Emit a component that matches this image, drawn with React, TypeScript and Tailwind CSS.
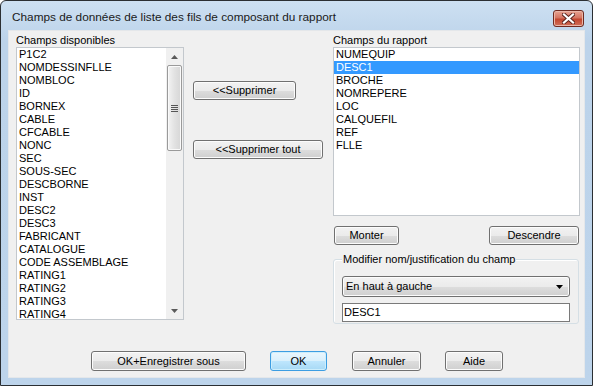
import React from 'react';

const leftItems = [
 'P1C2', 'NOMDESSINFLLE', 'NOMBLOC', 'ID', 'BORNEX', 'CABLE', 'CFCABLE', 'NONC', 'SEC', 'SOUS-SEC',
 'DESCBORNE', 'INST', 'DESC2', 'DESC3', 'FABRICANT', 'CATALOGUE', 'CODE ASSEMBLAGE',
 'RATING1', 'RATING2', 'RATING3', 'RATING4',
];

const rightItems = ['NUMEQUIP', 'DESC1', 'BROCHE', 'NOMREPERE', 'LOC', 'CALQUEFIL', 'REF', 'FLLE'];

const WinButton: React.FC<{ className?: string; primary?: boolean; children: React.ReactNode }> = ({ className = '', primary, children }) => (
 <button
 className={
 'flex items-center justify-center rounded-[3px] border text-[11px] leading-none text-black ' +
 (primary
 ? 'border-[#3c9de2] bg-[linear-gradient(#eaf6fd_0%,#d9f0fc_50%,#bee6fd_51%,#a7d9f5_100%)] shadow-[inset_0_0_0_1px_#cdeefc] '
 : 'border-[#707070] bg-[linear-gradient(#f2f2f2_0%,#ebebeb_50%,#dddddd_51%,#cfcfcf_100%)] shadow-[inset_0_0_0_1px_#fcfcfc] ') +
 className
 }
 >
 {children}
 </button>
);

const ScrollBar: React.FC = () => (
 <div className="flex h-full w-[17px] flex-col bg-[#f0f0f0]">
 <div className="flex h-[17px] items-center justify-center">
 <svg width="7" height="4" viewBox="0 0 7 4"><path d="M3.5 0 L7 4 L0 4 Z" fill="#5a5a5a" /></svg>
 </div>
 <div className="mx-[1px] flex h-[86px] items-center justify-center rounded-[2px] border border-[#9a9a9a] bg-[linear-gradient(90deg,#f3f3f3,#e2e2e2_50%,#d6d6d6)] shadow-[inset_0_0_0_1px_#fafafa]">
 <div className="flex flex-col gap-[1px]">
 <div className="h-[1px] w-[7px] bg-[#555]" />
 <div className="h-[1px] w-[7px] bg-[#555]" />
 <div className="h-[1px] w-[7px] bg-[#555]" />
 <div className="h-[1px] w-[7px] bg-[#555]" />
 </div>
 </div>
 <div className="flex-1" />
 <div className="flex h-[17px] items-center justify-center">
 <svg width="7" height="4" viewBox="0 0 7 4"><path d="M0 0 L7 0 L3.5 4 Z" fill="#5a5a5a" /></svg>
 </div>
 </div>
);

export default function App() {
 return (
 <div className="h-[386px] w-[593px] bg-white" style={{ fontFamily: '"Liberation Sans", Arial, sans-serif' }}>
 <div className="flex h-full w-full flex-col rounded-t-[6px] border border-[#2b2f33] bg-[linear-gradient(#cde0f2,#bcd3ea_40px,#bdd4eb)]">
 {/* title bar */}
 <div className="flex h-[29px] items-start">
 <div className="pl-[11px] pt-[9px] text-[11.8px] leading-[14px] text-[#1a1a1a]">
 Champs de données de liste des fils de composant du rapport
 </div>
 <div className="ml-auto mr-[8px] mt-[9px] flex h-[17px] w-[31px] items-center justify-center rounded-[3px] border border-[#6f2a20] bg-[linear-gradient(#e8a493,#d47461_45%,#c3462f_55%,#d0705a)] shadow-[inset_0_0_0_1px_#eab6a8]">
 <svg width="13" height="11" viewBox="0 0 13 11">
 <path d="M2 1.5 L11 9.5 M11 1.5 L2 9.5" stroke="#5b231c" strokeWidth="4" strokeLinecap="square" />
 <path d="M2 1.5 L11 9.5 M11 1.5 L2 9.5" stroke="#ffffff" strokeWidth="2.2" strokeLinecap="square" />
 </svg>
 </div>
 </div>

 {/* client area */}
 <div className="mx-[7px] mb-[7px] flex-1 border border-[#e4e7ea] bg-[#f0f0f0] text-[11px] leading-[13px] text-black">
 <div className="flex pl-[7px] pt-[3px]">
 {/* left column */}
 <div className="flex w-[168px] flex-col">
 <div className="h-[13px]">Champs disponibles</div>
 <div className="flex h-[273px] border border-[#c3c8cd] bg-white">
 <div className="flex-1">
 {leftItems.map((it) => (
 <div key={it} className="h-[13px] whitespace-nowrap pl-[2px]">{it}</div>
 ))}
 </div>
 <ScrollBar />
 </div>
 </div>

 {/* middle column */}
 <div className="ml-[9px] flex w-[130px] flex-col pt-[47px]">
 <WinButton className="h-[19px] w-[103px]">&lt;&lt;Supprimer</WinButton>
 <WinButton className="mt-[40px] h-[19px] w-[130px]">&lt;&lt;Supprimer tout</WinButton>
 </div>

 {/* right column */}
 <div className="ml-[10px] flex w-[247px] flex-col">
 <div className="h-[13px]">Champs du rapport</div>
 <div className="h-[169px] border border-[#c3c8cd] bg-white">
 {rightItems.map((it) => (
 <div
 key={it}
 className={'h-[13px] pl-[2px] ' + (it === 'DESC1' ? 'bg-[#3399ff] text-white' : '')}
 >
 {it}
 </div>
 ))}
 </div>
 <div className="mt-[10px] flex justify-between px-[1px]">
 <WinButton className="h-[19px] w-[65px]">Monter</WinButton>
 <WinButton className="h-[19px] w-[90px]">Descendre</WinButton>
 </div>
 <div className="relative mt-[8px] pt-[6px]">
 <div className="absolute left-[9px] top-0 bg-[#f0f0f0] px-[1px]">Modifier nom/justification du champ</div>
 <div className="h-[65px] w-[246px] rounded-[3px] border border-[#d5dfe5] px-[8px] pt-[16px] shadow-[inset_1px_1px_0_#ffffff]">
 <div className="flex h-[21px] w-[228px] items-center rounded-[3px] border border-[#707070] bg-[linear-gradient(#f2f2f2_0%,#ebebeb_50%,#dddddd_51%,#cfcfcf_100%)] pl-[3px] pr-[6px] shadow-[inset_0_0_0_1px_#fcfcfc]">
 <span>En haut à gauche</span>
 <svg className="ml-auto" width="7" height="4" viewBox="0 0 7 4"><path d="M0 0 L7 0 L3.5 4 Z" fill="#000" /></svg>
 </div>
 <div className="mt-[6px] flex h-[19px] w-[228px] items-center border border-[#7a7a7a] bg-white pl-[1px]">DESC1</div>
 </div>
 </div>
 </div>
 </div>

 {/* bottom buttons */}
 <div className="mt-[27px] flex pl-[82px]">
 <WinButton className="h-[20px] w-[155px]">OK+Enregistrer sous</WinButton>
 <WinButton primary className="ml-[24px] h-[20px] w-[57px]">OK</WinButton>
 <WinButton className="ml-[25px] h-[20px] w-[69px]">Annuler</WinButton>
 <WinButton className="ml-[24px] h-[20px] w-[58px]">Aide</WinButton>
 </div>
 </div>
 </div>
 </div>
 );
}
